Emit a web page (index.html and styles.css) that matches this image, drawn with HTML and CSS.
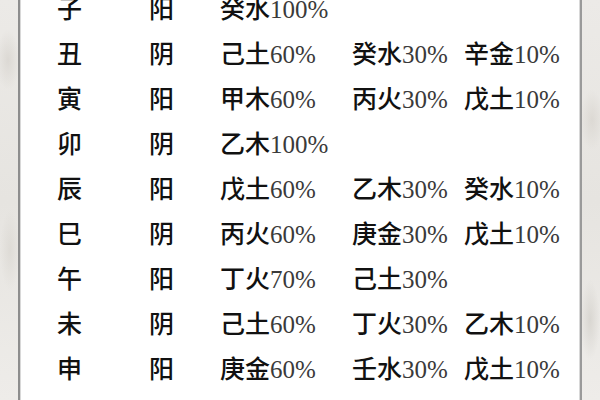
FILE: index.html
```html
<!DOCTYPE html>
<html lang="zh">
<head>
<meta charset="utf-8">
<link rel="stylesheet" href="styles.css">
</head>
<body>
<div class="panel">
  <div class="table">
    <span class="c">子</span><span class="c">阳</span><span><b>癸水</b>100%</span><span></span><span></span>
    <span class="c">丑</span><span class="c">阴</span><span><b>己土</b>60%</span><span><b>癸水</b>30%</span><span><b>辛金</b>10%</span>
    <span class="c">寅</span><span class="c">阳</span><span><b>甲木</b>60%</span><span><b>丙火</b>30%</span><span><b>戊土</b>10%</span>
    <span class="c">卯</span><span class="c">阴</span><span><b>乙木</b>100%</span><span></span><span></span>
    <span class="c">辰</span><span class="c">阳</span><span><b>戊土</b>60%</span><span><b>乙木</b>30%</span><span><b>癸水</b>10%</span>
    <span class="c">巳</span><span class="c">阴</span><span><b>丙火</b>60%</span><span><b>庚金</b>30%</span><span><b>戊土</b>10%</span>
    <span class="c">午</span><span class="c">阳</span><span><b>丁火</b>70%</span><span><b>己土</b>30%</span><span></span>
    <span class="c">未</span><span class="c">阴</span><span><b>己土</b>60%</span><span><b>丁火</b>30%</span><span><b>乙木</b>10%</span>
    <span class="c">申</span><span class="c">阳</span><span><b>庚金</b>60%</span><span><b>壬水</b>30%</span><span><b>戊土</b>10%</span>
    <span class="c">酉</span><span class="c">阴</span><span><b>辛金</b>100%</span><span></span><span></span>
  </div>
</div>
</body>
</html>
```

FILE: styles.css
```css
html, body {
  margin: 0;
  padding: 0;
}
body {
  width: 600px;
  height: 400px;
  overflow: hidden;
  background-color: #ebe9e6;
  background-image:
    radial-gradient(ellipse 12px 30px at 8px 60px, rgba(210,206,200,0.6), transparent),
    radial-gradient(ellipse 10px 40px at 10px 250px, rgba(215,212,206,0.6), transparent),
    radial-gradient(ellipse 12px 30px at 592px 120px, rgba(212,208,202,0.6), transparent),
    radial-gradient(ellipse 10px 40px at 590px 320px, rgba(205,202,196,0.6), transparent),
    linear-gradient(180deg, #eceae7, #e6e4e0 50%, #eeece9);
  font-family: "Liberation Serif", "Noto Sans CJK SC", serif;
  color: #3a3a3a;
}
.panel {
  margin: 0 18px;
  height: 400px;
  background: #ffffff;
  border-left: 2px solid #8d8d8d;
  border-right: 2px solid #9a9a9a;
  box-shadow: inset 1px 0 0 #d8d8d8, inset -1px 0 0 #d8d8d8;
  overflow: hidden;
}
.table {
  margin-top: -15px;
  padding-left: 37px;
  display: grid;
  grid-template-columns: 92px 71px 132px 112px auto;
  grid-auto-rows: 45px;
  font-size: 25px;
  line-height: 45px;
  white-space: nowrap;
}
.table b,
.table .c {
  font-family: "Noto Sans CJK SC", sans-serif;
  font-weight: 500;
  color: #111111;
}
```
